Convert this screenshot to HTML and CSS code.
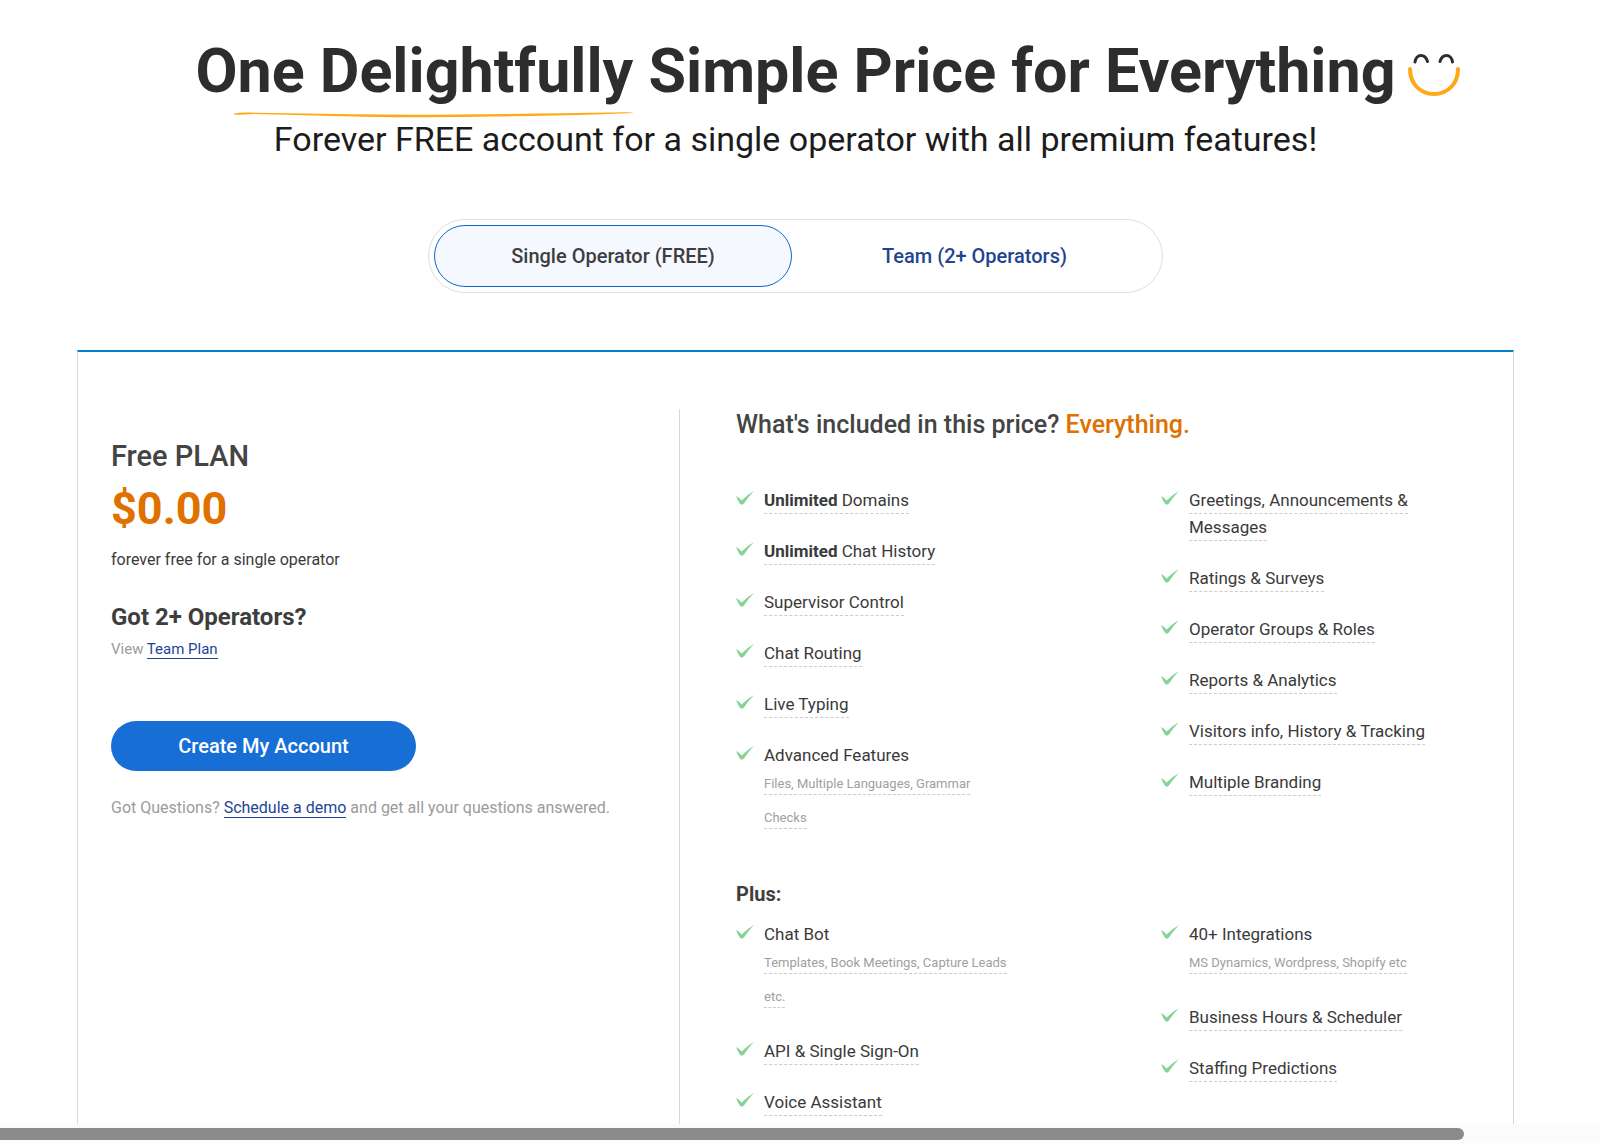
FILE: index.html
```html
<!DOCTYPE html>
<html lang="en">
<head>
    <meta charset="UTF-8">
    <meta name="viewport" content="width=device-width, initial-scale=1.0">
    <title>Pricing</title>
    <link rel="stylesheet" href="styles.css">
</head>
<body>
    <svg class="sprite" aria-hidden="true">
        <symbol id="check" viewBox="0 0 18 14">
            <path d="M0 5Q3 6.200 5.600 9.600Q10.500 4.200 18 0Q12.500 5.600 8.300 12Q6 15 3.800 12.500Q1.500 9 0 5Z"/>
        </symbol>
    </svg>

    <main class="page">
        <header class="hero">
            <h1 class="title">One Delightfully Simple Price for Everything
                <svg class="swash" viewBox="0 0 402 6" preserveAspectRatio="none" aria-hidden="true">
                    <path d="M1 1.500Q8 0 18 0.600Q90 1.400 150 2.600Q210 3 290 1.800Q350 0.800 390 0.200Q399 0 401 0.800Q392 1.600 370 2.200Q310 3.800 260 4.600Q200 6 130 4.800Q60 3 20 2Q8 3 1 2.600Z"/>
                </svg>
                <svg class="smile" viewBox="0 0 54 44" aria-hidden="true">
                    <path class="eye" d="M8 9C8.500 5 11 2.500 14 2.500C17 2.500 19.500 5 20.500 8.500M33 8.500C34 5 36.500 2.500 39.500 2.500C42.500 2.500 45 5 45.500 9"/>
                    <path class="mouth" d="M3 16C3 30 12.500 41 27 41C41.500 41 51 30 51 16"/>
                </svg>
            </h1>
            <p class="subtitle">Forever FREE account for a single operator with all premium features!</p>
        </header>

        <div class="plan-switch">
            <button class="plan-option active" type="button">Single Operator (FREE)</button>
            <button class="plan-option" type="button">Team (2+ Operators)</button>
        </div>

        <div class="card">
            <section class="plan">
                <h2 class="plan-name">Free PLAN</h2>
                <p class="plan-price">$0.00</p>
                <p class="plan-note">forever free for a single operator</p>
                <h3 class="plan-question">Got 2+ Operators?</h3>
                <p class="plan-view">View <a href="#">Team Plan</a></p>
                <button class="create-btn" type="button">Create My Account</button>
                <p class="plan-demo">Got Questions? <a href="#">Schedule a demo</a> and get all your questions answered.</p>
            </section>

            <section class="features">
                <h2 class="features-title">What's included in this price? <span class="accent">Everything.</span></h2>
                <div class="feature-columns">
                    <ul class="feature-list">
                        <li><svg class="check"><use href="#check"/></svg><div><span class="label"><b>Unlimited</b> Domains</span></div></li>
                        <li><svg class="check"><use href="#check"/></svg><div><span class="label"><b>Unlimited</b> Chat History</span></div></li>
                        <li><svg class="check"><use href="#check"/></svg><div><span class="label">Supervisor Control</span></div></li>
                        <li><svg class="check"><use href="#check"/></svg><div><span class="label">Chat Routing</span></div></li>
                        <li><svg class="check"><use href="#check"/></svg><div><span class="label">Live Typing</span></div></li>
                        <li><svg class="check"><use href="#check"/></svg><div>Advanced Features<p class="details"><span class="label">Files, Multiple Languages, Grammar Checks</span></p></div></li>
                    </ul>
                    <ul class="feature-list">
                        <li><svg class="check"><use href="#check"/></svg><div><span class="label">Greetings, Announcements &amp; Messages</span></div></li>
                        <li><svg class="check"><use href="#check"/></svg><div><span class="label">Ratings &amp; Surveys</span></div></li>
                        <li><svg class="check"><use href="#check"/></svg><div><span class="label">Operator Groups &amp; Roles</span></div></li>
                        <li><svg class="check"><use href="#check"/></svg><div><span class="label">Reports &amp; Analytics</span></div></li>
                        <li><svg class="check"><use href="#check"/></svg><div><span class="label">Visitors info, History &amp; Tracking</span></div></li>
                        <li><svg class="check"><use href="#check"/></svg><div><span class="label">Multiple Branding</span></div></li>
                    </ul>
                </div>

                <h3 class="plus-title">Plus:</h3>
                <div class="feature-columns">
                    <ul class="feature-list">
                        <li><svg class="check"><use href="#check"/></svg><div>Chat Bot<p class="details"><span class="label">Templates, Book Meetings, Capture Leads etc.</span></p></div></li>
                        <li><svg class="check"><use href="#check"/></svg><div><span class="label">API &amp; Single Sign-On</span></div></li>
                        <li><svg class="check"><use href="#check"/></svg><div><span class="label">Voice Assistant</span></div></li>
                    </ul>
                    <ul class="feature-list">
                        <li><svg class="check"><use href="#check"/></svg><div>40+ Integrations<p class="details"><span class="label">MS Dynamics, Wordpress, Shopify etc</span></p></div></li>
                        <li><svg class="check"><use href="#check"/></svg><div><span class="label">Business Hours &amp; Scheduler</span></div></li>
                        <li><svg class="check"><use href="#check"/></svg><div><span class="label">Staffing Predictions</span></div></li>
                    </ul>
                </div>
            </section>
        </div>
    </main>

    <div class="scroll-track">
        <div class="scroll-thumb"></div>
    </div>
</body>
</html>
```

FILE: styles.css
```css
* {
    box-sizing: border-box;
}
body {
    display: flex;
    flex-direction: column;
    height: 100vh;
    margin: 0;
    overflow: hidden;
    background: #fff;
    color: #3a3a3a;
    font-family: Roboto, Arial, sans-serif;
    font-size: 17px;
    line-height: 27px;
}
h1, h2, h3, p, ul {
    margin: 0;
    padding: 0;
}
button {
    font-family: inherit;
    cursor: pointer;
}
b {
    font-weight: 700;
}
a {
    color: #1c4595;
    text-decoration: none;
    border-bottom: 1px solid #1c4595;
}
.sprite {
    display: none;
}
.page {
    flex: 1;
    min-height: 0;
    overflow: hidden;
    padding: 37px 86px 0 77px;
}

/* Heading */
.hero {
    text-align: center;
}
.title {
    position: relative;
    width: fit-content;
    margin: 0 auto;
    color: #2d2d2d;
    font-size: 61px;
    font-weight: 700;
    line-height: 68px;
}
.swash {
    position: absolute;
    left: 38px;
    top: 75px;
    width: 402px;
    height: 6px;
    fill: #ffa914;
}
.smile {
    position: absolute;
    left: 100%;
    top: 16px;
    width: 54px;
    height: 44px;
    margin-left: 11px;
    fill: none;
    stroke-linecap: round;
}
.eye {
    stroke: #2d2d2d;
    stroke-width: 3;
}
.mouth {
    stroke: #ffa818;
    stroke-width: 4;
}
.subtitle {
    margin-top: 14px;
    color: #1c1c1c;
    font-size: 34px;
    line-height: 40px;
}

/* Plan switch */
.plan-switch {
    display: flex;
    width: 735px;
    max-width: 100%;
    margin: 60px auto 57px;
    padding: 5px;
    border: 1px solid #dedede;
    border-radius: 38px;
}
.plan-option {
    flex: 1;
    height: 62px;
    border: 1px solid transparent;
    border-radius: 31px;
    background: none;
    color: #1f4590;
    font-size: 20px;
    font-weight: 500;
}
.plan-option.active {
    flex: 0 1 358px;
    border-color: #0f66d0;
    background: #f5f9ff;
    color: #3e3e3e;
}

/* Card */
.card {
    display: grid;
    grid-template-columns: 601px 1fr;
    min-height: 100%;
    padding: 57px 66px 0 0;
    border: 1px solid #d8d8d8;
    border-top: 2px solid #0082cc;
}
.plan {
    padding: 29px 33px;
}
.plan-name {
    color: #444;
    font-size: 29px;
    font-weight: 500;
    line-height: 36px;
}
.plan-price {
    margin-top: 8px;
    color: #e07000;
    font-size: 45px;
    font-weight: 700;
    line-height: 54px;
}
.plan-note {
    margin-top: 10px;
    font-size: 16px;
}
.plan-question {
    margin-top: 28px;
    color: #3e3e3e;
    font-size: 24px;
    font-weight: 700;
    line-height: 32px;
}
.plan-view {
    margin-top: 3px;
    color: #9b9b9b;
    font-size: 15px;
}
.create-btn {
    display: block;
    width: 305px;
    height: 50px;
    margin: 58px 0 23px;
    border: 0;
    border-radius: 25px;
    background: #176fd6;
    color: #fff;
    font-size: 20px;
    font-weight: 500;
}
.plan-demo {
    color: #9b9b9b;
    font-size: 16px;
}

/* Features */
.features {
    padding-left: 56px;
    border-left: 1px solid #d8d8d8;
}
.features-title {
    margin-bottom: 46px;
    color: #444;
    font-size: 25px;
    font-weight: 500;
    line-height: 32px;
}
.accent {
    color: #e07000;
}
.feature-columns {
    display: grid;
    grid-template-columns: minmax(0, 275px) minmax(0, 275px);
    column-gap: 150px;
}
.feature-list {
    list-style: none;
}
.feature-list li {
    display: flex;
    gap: 10px;
    margin-bottom: 24px;
}
.check {
    flex: none;
    width: 18px;
    height: 14px;
    margin-top: 4px;
    fill: #84d498;
}
.label {
    padding-bottom: 3px;
    border-bottom: 1px dashed #ccc;
}
.details {
    margin-top: -2px;
    color: #a0a0a0;
    font-size: 13px;
    line-height: 34px;
}
.plus-title {
    margin: 22px 0 13px;
    color: #3e3e3e;
    font-size: 20px;
    font-weight: 700;
}

/* Horizontal scrollbar */
.scroll-track {
    height: 19px;
    padding: 4px 136px 3px 0;
    background: #fbfbfb;
}
.scroll-thumb {
    height: 12px;
    border-radius: 0 6px 6px 0;
    background: #8b8b8b;
}
```
